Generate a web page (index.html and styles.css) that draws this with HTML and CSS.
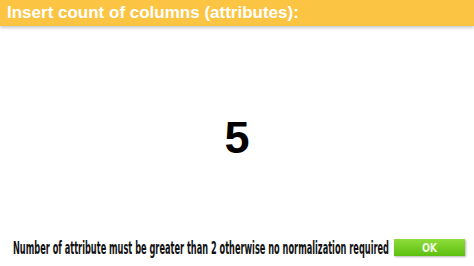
FILE: index.html
```html
<!DOCTYPE html>
<html lang="en">
<head>
  <meta charset="UTF-8" />
  <title>Attributes</title>
  <link rel="stylesheet" href="styles.css">
</head>
<body>
  <header class="title-bar">Insert count of columns (attributes):</header>

  <main class="value-area">
    <div class="value">5</div>
  </main>

  <footer class="note-row">
    <p class="note"><span class="squeeze">Number of attribute must be greater than 2 otherwise no normalization required</span></p>
    <button class="ok-btn"><span class="squeeze">OK</span></button>
  </footer>
</body>
</html>
```

FILE: styles.css
```css
body {
  margin: 0;
  width: 474px;
  height: 266px;
  background: #fff;
  font-family: "Liberation Sans", Arial, sans-serif;
  display: flex;
  flex-direction: column;
  overflow: hidden;
}

.title-bar {
  height: 26px;
  line-height: 26px;
  padding-left: 7px;
  background: #fcc443;
  color: #fff;
  font-size: 17px;
  font-weight: bold;
  box-shadow: 0 2px 3px rgba(0, 0, 0, 0.2);
}

.value-area {
  flex-grow: 1;
  display: flex;
  justify-content: center;
  padding-top: 86px;
}

.value {
  font-size: 45px;
  font-weight: bold;
  color: #000;
  line-height: 52px;
  height: 52px;
}

.note-row {
  display: flex;
  align-items: center;
  padding: 0 9px 9px 13px;
  height: 19px;
}

.note {
  margin: 0;
  width: 378px;
  flex-shrink: 0;
  overflow: hidden;
  font-family: "DejaVu Sans Condensed", "DejaVu Sans", sans-serif;
  font-weight: bold;
  font-size: 17px;
  color: #111;
  white-space: nowrap;
}

.squeeze {
  display: inline-block;
  transform: scaleX(0.537);
  transform-origin: left center;
}

.ok-btn {
  margin-left: auto;
  width: 71px;
  height: 17px;
  padding: 0;
  border: none;
  background: linear-gradient(#8fdc3a, #5cbf10);
  color: #eef8e0;
  font-family: "DejaVu Sans Condensed", sans-serif;
  font-weight: bold;
  font-size: 13px;
  box-shadow: 1px 1px 2px rgba(0, 0, 0, 0.3);
}

.ok-btn .squeeze {
  transform-origin: center;
  transform: scaleX(0.8);
}
```
